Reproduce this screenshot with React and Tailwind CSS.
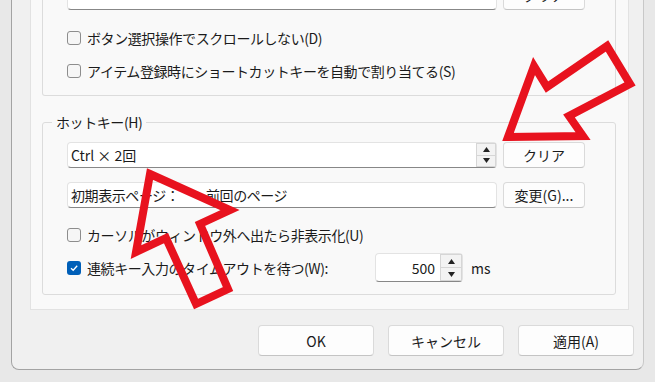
import React from 'react'

function Checkbox({ checked }) {
  if (checked) {
    return (
      <span className="w-[14px] h-[14px] rounded-[3px] bg-[#005fb8] flex items-center justify-center shrink-0">
        <svg width="10" height="10" viewBox="0 0 10 10">
          <path d="M2 5.2 L4.2 7.3 L8.2 2.8" fill="none" stroke="#fff" strokeWidth="1.3" />
        </svg>
      </span>
    )
  }
  return <span className="w-[14px] h-[14px] rounded-[3px] border border-[#8d8d8d] bg-[#f6f6f6] shrink-0" />
}

function CheckRow({ checked, label, className = '' }) {
  return (
    <div className={`flex items-center gap-[6px] h-[20px] ${className}`}>
      <Checkbox checked={checked} />
      <span className="text-[14px] tracking-[-0.03em] leading-none">{label}</span>
    </div>
  )
}

function Spinner({ className = '' }) {
  return (
    <div className={`flex flex-col bg-[#f3f3f3] border border-[#d6d6d6] ${className}`}>
      <div className="flex-1 flex items-center justify-center border-b border-[#d6d6d6]">
        <svg width="7" height="5" viewBox="0 0 7 5"><path d="M0 5 L3.5 0 L7 5 Z" fill="#222" /></svg>
      </div>
      <div className="flex-1 flex items-center justify-center">
        <svg width="7" height="5" viewBox="0 0 7 5"><path d="M0 0 L3.5 5 L7 0 Z" fill="#222" /></svg>
      </div>
    </div>
  )
}

function Button({ children, className = '' }) {
  return (
    <div className={`bg-[#fdfdfd] border border-[#dadada] border-b-[#c4c4c4] rounded-[4px] flex items-center justify-center text-[14px] leading-none ${className}`}>
      {children}
    </div>
  )
}

export default function App() {
  return (
    <div className="relative w-[655px] h-[382px] overflow-hidden bg-[#e8e8e8] text-[#1b1b1b] font-['Noto_Sans_CJK_JP','Noto_Sans',sans-serif]">
      {/* dialog window */}
      <div className="flex flex-col ml-[11px] w-[633px] h-[370px] bg-[#f0f0f0] border-x border-b border-[#a3a3a3] border-r-[#c8c8c8] rounded-b-[8px]">
        {/* tab page */}
        <div className="flex flex-col ml-[18px] w-[599px] h-[310px] bg-[#f9f9f9] border-x border-b border-[#e2e2e2] pl-[11px]">
          {/* upper group box (cut off) */}
          <div className="flex flex-col w-[574px] h-[96px] shrink-0 border-x border-b border-[#dcdcdc] rounded-b-[3px] pl-[24px]">
            <div className="-mt-[20px] h-[30px] flex shrink-0">
              <div className="w-[430px] h-full bg-white border border-[#e3e3e3] border-b-[#878787] rounded-[4px]" />
              <Button className="ml-[6px] w-[82px] h-full">クリア</Button>
            </div>
            <CheckRow className="mt-[18px]" label="ボタン選択操作でスクロールしない(D)" />
            <CheckRow className="mt-[13px]" label="アイテム登録時にショートカットキーを自動で割り当てる(S)" />
          </div>

          {/* hotkey group box */}
          <div className="relative flex flex-col mt-[26px] w-[574px] h-[173px] shrink-0 border border-[#dcdcdc] rounded-[3px] pl-[24px] pt-[19px]">
            <span className="absolute -top-[11px] left-[9px] px-[4px] bg-[#f9f9f9] text-[14px] tracking-[-0.03em] leading-[20px]">ホットキー(H)</span>

            <div className="flex h-[26px] shrink-0">
              <div className="w-[430px] h-full bg-white border border-[#e3e3e3] border-b-[#878787] rounded-[4px] flex items-center pl-[3px]">
                <span className="flex-1 text-[14px] leading-none">Ctrl × 2回</span>
                <Spinner className="w-[20px] h-[24px]" />
              </div>
              <Button className="ml-[6px] w-[82px] h-full">クリア</Button>
            </div>

            <div className="flex h-[26px] mt-[14px] shrink-0">
              <div className="w-[430px] h-full bg-white border border-[#e3e3e3] border-b-[#878787] rounded-[4px] flex items-center pl-[3px] text-[14px] tracking-[-0.03em] leading-none">
                <span className="w-[135px]">初期表示ページ：</span>
                <span>前回のページ</span>
              </div>
              <Button className="ml-[6px] w-[82px] h-full">変更(G)...</Button>
            </div>

            <CheckRow className="mt-[17px]" label="カーソルがウィンドウ外へ出たら非表示化(U)" />

            <div className="flex items-center h-[29px] mt-[8px] shrink-0">
              <div className="w-[308px]">
                <CheckRow checked label="連続キー入力のタイムアウトを待つ(W):" />
              </div>
              <div className="w-[88px] h-full bg-white border border-[#e3e3e3] border-b-[#878787] rounded-[4px] flex items-center">
                <span className="flex-1 text-right pr-[5px] text-[14px] leading-none">500</span>
                <Spinner className="w-[22px] h-[27px]" />
              </div>
              <span className="ml-[8px] text-[14px] leading-none">ms</span>
            </div>
          </div>
        </div>

        {/* dialog buttons */}
        <div className="mt-[15px] flex justify-end gap-[14px] pr-[9px]">
          <Button className="w-[116px] h-[31px]">OK</Button>
          <Button className="w-[116px] h-[31px]">キャンセル</Button>
          <Button className="w-[116px] h-[31px]">適用(A)</Button>
        </div>
      </div>

      {/* red annotation arrows */}
      <svg className="absolute inset-0 pointer-events-none" width="655" height="382" viewBox="0 0 655 382">
        <polygon
          points="508,137 534,66 547,87 607,46 630,84 569,116 583,136"
          fill="none" stroke="#e8121e" strokeWidth="8" strokeLinejoin="miter" strokeMiterlimit="10"
        />
        <polygon
          points="150,174 230,210 200,224 228,289 196,304 166,238 136,252"
          fill="none" stroke="#e8121e" strokeWidth="8" strokeLinejoin="miter" strokeMiterlimit="10"
        />
      </svg>
    </div>
  )
}
